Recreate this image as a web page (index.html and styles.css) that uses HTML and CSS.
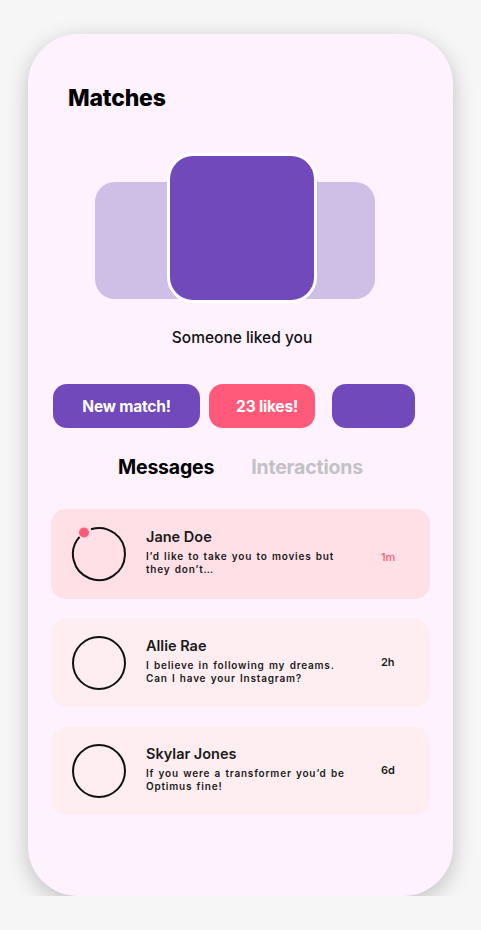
FILE: index.html
```html
<!DOCTYPE html>
<html lang="en">
<head>
<meta charset="utf-8">
<title>Matches</title>
<link rel="stylesheet" href="styles.css">
</head>
<body>
<div class="phone">
  <h1 class="title">Matches</h1>

  <div class="stack">
    <div class="card-back"></div>
    <div class="card-front"></div>
  </div>
  <p class="liked">Someone liked you</p>

  <div class="chips">
    <button class="chip chip-purple chip-match">New match!</button>
    <button class="chip chip-pink chip-likes">23 likes!</button>
    <button class="chip chip-purple chip-empty"></button>
  </div>

  <div class="tabs">
    <span class="tab tab-active">Messages</span>
    <span class="tab tab-muted">Interactions</span>
  </div>

  <div class="list">
    <div class="msg msg-new">
      <div class="avatar">
        <svg width="56" height="56" viewBox="0 0 56 56">
          <path d="M 20 3.3 A 26 26 0 1 1 8.5 10.8" fill="none" stroke="#111" stroke-width="2"/>
          <circle cx="13" cy="6.5" r="5" fill="#ff5a79"/>
        </svg>
      </div>
      <div class="msg-body">
        <div class="msg-name">Jane Doe</div>
        <div class="msg-text">I’d like to take you to movies but they don’t…</div>
      </div>
      <div class="msg-time time-new">1m</div>
    </div>

    <div class="msg">
      <div class="avatar">
        <svg width="56" height="56" viewBox="0 0 56 56">
          <circle cx="28" cy="28" r="26" fill="none" stroke="#111" stroke-width="2"/>
        </svg>
      </div>
      <div class="msg-body">
        <div class="msg-name">Allie Rae</div>
        <div class="msg-text">I believe in following my dreams. Can I have your Instagram?</div>
      </div>
      <div class="msg-time">2h</div>
    </div>

    <div class="msg">
      <div class="avatar">
        <svg width="56" height="56" viewBox="0 0 56 56">
          <circle cx="28" cy="28" r="26" fill="none" stroke="#111" stroke-width="2"/>
        </svg>
      </div>
      <div class="msg-body">
        <div class="msg-name">Skylar Jones</div>
        <div class="msg-text">If you were a transformer you’d be Optimus fine!</div>
      </div>
      <div class="msg-time">6d</div>
    </div>
  </div>
</div>
</body>
</html>
```

FILE: styles.css
```css
* { box-sizing: border-box; }

html, body {
  margin: 0;
  padding: 0;
  background: #f6f6f6;
}

body {
  padding: 34px 0 0 28px;
  font-family: "Inter", "Lato", sans-serif;
  color: #111;
}

.phone {
  width: 425px;
  height: 862px;
  background: #fdf2fd;
  border-radius: 50px;
  box-shadow: 0 6px 22px rgba(0, 0, 0, 0.22);
  padding: 48px 0 0 0;
  display: flex;
  flex-direction: column;
}

.title {
  margin: 0 0 0 40px;
  font-size: 23px;
  line-height: 32px;
  font-weight: 800;
  letter-spacing: -0.2px;
  color: #000;
}

.stack {
  margin: 39px 0 0 67px;
  width: 280px;
  height: 149px;
  display: grid;
}

.card-back,
.card-front {
  grid-area: 1 / 1;
}

.card-back {
  margin-top: 29px;
  height: 117px;
  background: #cdbfe5;
  border-radius: 20px;
}

.card-front {
  justify-self: start;
  margin-left: 72px;
  width: 150px;
  height: 150px;
  background: #7149bb;
  border: 3px solid #fff;
  border-radius: 26px;
}

.liked {
  margin: 26px 0 0 0;
  text-align: center;
  padding-left: 3px;
  font-size: 15.5px;
  line-height: 20px;
  font-weight: 500;
  color: #111;
}

.chips {
  display: flex;
  margin: 36px 0 0 25px;
}

.chip {
  height: 44px;
  border: none;
  border-radius: 14px;
  color: #fff;
  font-family: inherit;
  font-size: 15.5px;
  font-weight: 700;
  letter-spacing: -0.2px;
  padding: 0;
}

.chip-purple { background: #7149bb; }
.chip-pink { background: #ff5a79; }

.chip-match { width: 147px; }
.chip-likes { width: 106px; margin-left: 9px; padding-left: 10px; }
.chip-empty { width: 83px; margin-left: 17px; }

.tabs {
  display: flex;
  margin: 24px 0 0 90px;
  gap: 37px;
  font-size: 19.5px;
  line-height: 30px;
  font-weight: 700;
  letter-spacing: -0.2px;
}

.tab-active { color: #000; }
.tab-muted { color: #c4c0c6; }

.list {
  margin: 27px 0 0 23px;
  width: 379px;
  display: flex;
  flex-direction: column;
  gap: 20px;
}

.msg {
  display: flex;
  align-items: center;
  height: 88px;
  border-radius: 15px;
  background: #ffeef1;
  padding: 0 0 0 20px;
}

.msg-new {
  height: 90px;
  background: #ffe0e6;
}

.avatar {
  width: 56px;
  height: 56px;
  flex: none;
}

.avatar svg { display: block; }

.msg-body {
  margin-left: 19px;
  width: 205px;
  margin-top: -6px;
}

.msg-name {
  font-size: 14.5px;
  line-height: 20px;
  font-weight: 600;
  color: #1a1a1a;
}

.msg-text {
  margin-top: 3px;
  font-size: 10px;
  line-height: 13px;
  font-weight: 600;
  letter-spacing: 0.8px;
  word-spacing: 1px;
  color: #1a1a1a;
}

.msg-time {
  margin-left: 30px;
  font-size: 11px;
  font-weight: 600;
  color: #1a1a1a;
  margin-top: -2px;
}

.time-new {
  color: #ff5a79;
  font-weight: 500;
  margin-top: 6px;
}
```
